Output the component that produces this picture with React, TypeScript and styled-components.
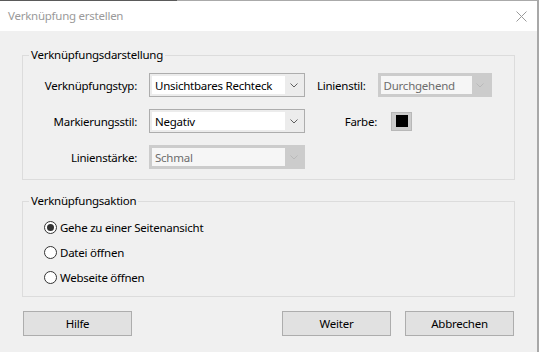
import React from "react";
import styled, { createGlobalStyle } from "styled-components";

const Global = createGlobalStyle`
  html, body { margin: 0; padding: 0; background: #f0f0f0; }
  body {
    font-family: "Noto Sans", "Liberation Sans", sans-serif;
    font-size: 11.5px;
    letter-spacing: -0.25px;
    color: #000;
  }
  * { box-sizing: border-box; }
`;

const Frame = styled.div`
  width: 539px;
  height: 352px;
  display: flex;
  flex-direction: column;
  background: #f0f0f0;
  border-right: 2px solid #a8a8a8;
  overflow: hidden;
`;

const TitleBar = styled.div`
  height: 31px;
  flex: none;
  display: flex;
  align-items: center;
  justify-content: space-between;
  padding: 1px 10px 0 8px;
  background:
    linear-gradient(to right, #5a5a5a 177px, #aaaaaa 177px) top left / 100% 1px no-repeat,
    #ffffff;
`;

const Title = styled.span`
  color: #9a9a9a;
  line-height: 16px;
`;

const Body = styled.div`
  flex: 1;
  display: flex;
  flex-direction: column;
  padding: 16px 22px 0 22px;
`;

const Group = styled.fieldset<{ $h: number; $mb: number }>`
  margin: 0 0 ${(p) => p.$mb}px 0;
  padding: 0;
  border: 1px solid #dcdcdc;
  height: ${(p) => p.$h}px;
  min-width: 0;
`;

const Legend = styled.legend`
  margin-left: 6px;
  padding: 0 2px;
  line-height: 16px;
`;

const Rows = styled.div`
  display: flex;
  flex-direction: column;
  gap: 12px;
  padding-top: 10px;
`;

const Row = styled.div`
  display: flex;
  align-items: center;
  height: 24px;
`;

const Label = styled.span<{ $w?: number; $ml?: number }>`
  width: ${(p) => (p.$w ? `${p.$w}px` : "auto")};
  margin-left: ${(p) => p.$ml ?? 0}px;
  text-align: right;
  flex: none;
  white-space: nowrap;
`;

const Combo = styled.div<{ $w: number; $disabled?: boolean; $ml: number }>`
  width: ${(p) => p.$w}px;
  height: 24px;
  margin-left: ${(p) => p.$ml}px;
  flex: none;
  display: flex;
  align-items: stretch;
  padding: 2px;
  border: 1px solid ${(p) => (p.$disabled ? "#cccccc" : "#adadad")};
  background: ${(p) => (p.$disabled ? "#cccccc" : "#ececec")};
`;

const Field = styled.div<{ $disabled?: boolean }>`
  flex: 1;
  display: flex;
  align-items: center;
  padding-left: 3px;
  background: ${(p) => (p.$disabled ? "#f6f6f6" : "#ffffff")};
  color: ${(p) => (p.$disabled ? "#6d6d6d" : "#000")};
  white-space: nowrap;
  overflow: hidden;
`;

const ArrowBox = styled.div`
  width: 17px;
  flex: none;
  display: flex;
  align-items: center;
  justify-content: center;
`;

const Chevron = ({ color }: { color: string }) => (
  <svg width="8" height="5" viewBox="0 0 8 5">
    <path d="M0.5 0.5 L4 4 L7.5 0.5" fill="none" stroke={color} strokeWidth="1" />
  </svg>
);

const Select = ({ w, value, disabled, ml }: { w: number; value: string; disabled?: boolean; ml: number }) => (
  <Combo $w={w} $disabled={disabled} $ml={ml}>
    <Field $disabled={disabled}>{value}</Field>
    <ArrowBox>
      <Chevron color={disabled ? "#b9b9b9" : "#5f5f5f"} />
    </ArrowBox>
  </Combo>
);

const Swatch = styled.div`
  width: 21px;
  height: 19px;
  margin-left: 14px;
  display: flex;
  align-items: center;
  justify-content: center;
  background: #cccccc;
  border: 1px solid #b8b8b8;
`;

const SwatchColor = styled.div<{ $c: string }>`
  width: 12px;
  height: 12px;
  background: ${(p) => p.$c};
`;

const Radios = styled.div`
  display: flex;
  flex-direction: column;
  padding: 6px 0 0 21px;
`;

const RadioRow = styled.label`
  display: flex;
  align-items: center;
  height: 25px;
  gap: 3px;
`;

const RadioCircle = styled.span<{ $on?: boolean }>`
  width: 13px;
  height: 13px;
  border-radius: 50%;
  border: 1px solid #333;
  background: #fff;
  display: flex;
  align-items: center;
  justify-content: center;
  &::after {
    content: "";
    width: 7px;
    height: 7px;
    border-radius: 50%;
    background: ${(p) => (p.$on ? "#333" : "transparent")};
  }
`;

const ButtonBar = styled.div`
  display: flex;
  padding: 0 1px;
  gap: 14px;
`;

const Button = styled.button<{ $push?: boolean }>`
  width: 109px;
  height: 25px;
  margin-left: ${(p) => (p.$push ? "auto" : "0")};
  border: 1px solid #adadad;
  background: #e1e1e1;
  font-family: inherit;
  font-size: inherit;
  letter-spacing: inherit;
  color: #000;
  padding: 0;
`;

export default function App() {
  return (
    <>
      <Global />
      <Frame>
        <TitleBar>
          <Title>Verknüpfung erstellen</Title>
          <svg width="11" height="11" viewBox="0 0 11 11">
            <path d="M0.5 0.5 L10.5 10.5 M10.5 0.5 L0.5 10.5" stroke="#9a9a9a" strokeWidth="1" />
          </svg>
        </TitleBar>
        <Body>
          <Group $h={133} $mb={13}>
            <Legend>Verknüpfungsdarstellung</Legend>
            <Rows>
              <Row>
                <Label $w={114}>Verknüpfungstyp:</Label>
                <Select w={156} ml={12} value="Unsichtbares Rechteck" />
                <Label $ml={12}>Linienstil:</Label>
                <Select w={114} ml={12} value="Durchgehend" disabled />
              </Row>
              <Row>
                <Label $w={114}>Markierungsstil:</Label>
                <Select w={156} ml={12} value="Negativ" />
                <Label $w={72}>Farbe:</Label>
                <Swatch>
                  <SwatchColor $c="#000000" />
                </Swatch>
              </Row>
              <Row>
                <Label $w={114}>Linienstärke:</Label>
                <Select w={156} ml={12} value="Schmal" disabled />
              </Row>
            </Rows>
          </Group>
          <Group $h={104} $mb={14}>
            <Legend>Verknüpfungsaktion</Legend>
            <Radios>
              <RadioRow>
                <RadioCircle $on />
                Gehe zu einer Seitenansicht
              </RadioRow>
              <RadioRow>
                <RadioCircle />
                Datei öffnen
              </RadioRow>
              <RadioRow>
                <RadioCircle />
                Webseite öffnen
              </RadioRow>
            </Radios>
          </Group>
          <ButtonBar>
            <Button>Hilfe</Button>
            <Button $push>Weiter</Button>
            <Button>Abbrechen</Button>
          </ButtonBar>
        </Body>
      </Frame>
    </>
  );
}
